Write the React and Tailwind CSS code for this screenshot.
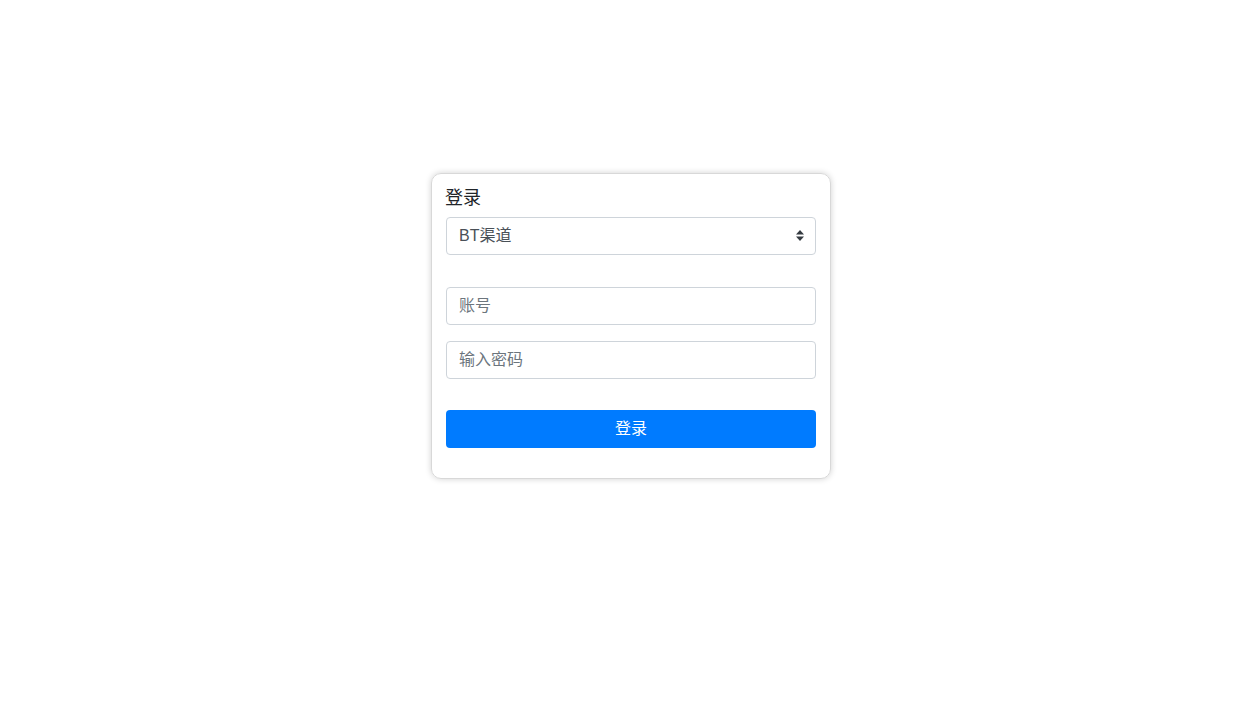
import React from 'react';

const font = { fontFamily: '"Liberation Sans", "Noto Sans CJK SC", sans-serif' };

const fieldCls = "w-full h-[38px] px-3 bg-white border border-[#ced4da] rounded-[4px] text-[16px] text-[#495057] placeholder-[#6c757d] focus:outline-none";

export default function App() {
  return (
    <div className="min-h-screen bg-white flex justify-center pl-[7px] pt-[173px]" style={font}>
      <div className="w-[400px] h-[306px] self-start border border-[#d8d8d8] rounded-[10px] shadow-[0_0_6px_rgba(0,0,0,0.18)] px-[14px] pt-[13px]">
        <h1 className="text-[18px] leading-[22px] text-[#212529] mb-2 -ml-px">登录</h1>

        {/* channel select */}
        <div className="relative">
          <div className={`${fieldCls} flex items-center`}>BT渠道</div>
          <svg className="absolute right-[12px] top-[12px]" width="8" height="13" viewBox="0 0 8 13">
            <path d="M4 1 L8 5.5 H0 Z" fill="#343a40" />
            <path d="M4 12 L8 7.5 H0 Z" fill="#343a40" />
          </svg>
        </div>

        <div className="mt-[32px] flex flex-col gap-4">
          <input type="text" className={fieldCls} placeholder="账号" />
          <input type="password" className={fieldCls} placeholder="输入密码" />
        </div>

        <button type="button" className="w-full h-[38px] mt-[31px] bg-[#007bff] text-white text-[16px] rounded-[4px]">
          登录
        </button>
      </div>
    </div>
  );
}
